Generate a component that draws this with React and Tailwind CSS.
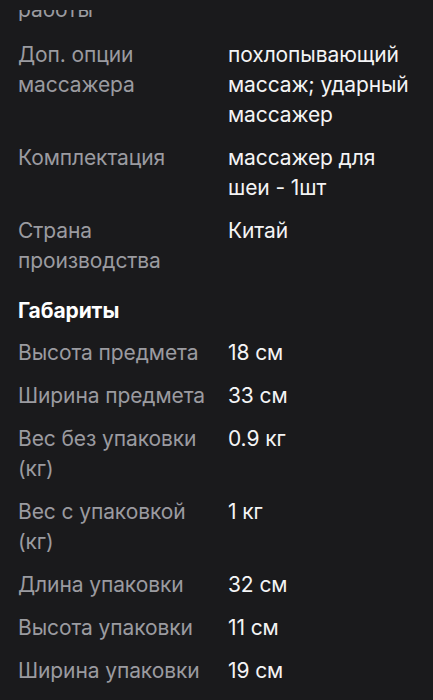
import React from 'react';

const topRows = [
    { label: 'Доп. опции массажера', value: 'похлопывающий массаж; ударный массажер' },
    { label: 'Комплектация', value: 'массажер для шеи - 1шт' },
    { label: 'Страна производства', value: 'Китай' },
];

const sizeRows = [
    { label: 'Высота предмета', value: '18 см' },
    { label: 'Ширина предмета', value: '33 см' },
    { label: 'Вес без упаковки (кг)', value: '0.9 кг' },
    { label: 'Вес с упаковкой (кг)', value: '1 кг' },
    { label: 'Длина упаковки', value: '32 см' },
    { label: 'Высота упаковки', value: '11 см' },
    { label: 'Ширина упаковки', value: '19 см' },
];

function SpecRow({ label, value }) {
    return (
        <div className="grid grid-cols-[200px_1fr] gap-x-[10px]">
            <div className="text-[#9b9ba0]">{label}</div>
            <div className="text-[#f4f4f5]">{value}</div>
        </div>
    );
}

export default function App() {
    return (
        <div className="relative min-h-[700px] w-full overflow-hidden bg-[#1a1a1c] px-[18px] font-['Inter','Noto_Sans',sans-serif] text-[21px] leading-[30px] tracking-[-0.1px]">
            {/* header edge covering the scrolled content */}
            <div className="absolute inset-x-0 top-0 z-10 h-[10px] bg-[#1a1a1c]" />

            <div className="-mt-[5px] flex flex-col gap-[13px]">
                {/* tail of the previous row, cut by the top edge */}
                <div className="mb-[2px] text-[#9b9ba0]">работы</div>
                {topRows.map((row) => (
                    <SpecRow key={row.label} {...row} />
                ))}
            </div>

            <h3 className="mt-[20px] mb-[12px] font-bold text-white">Габариты</h3>

            <div className="flex flex-col gap-[13px] pb-6">
                {sizeRows.map((row) => (
                    <SpecRow key={row.label} {...row} />
                ))}
            </div>
        </div>
    );
}
